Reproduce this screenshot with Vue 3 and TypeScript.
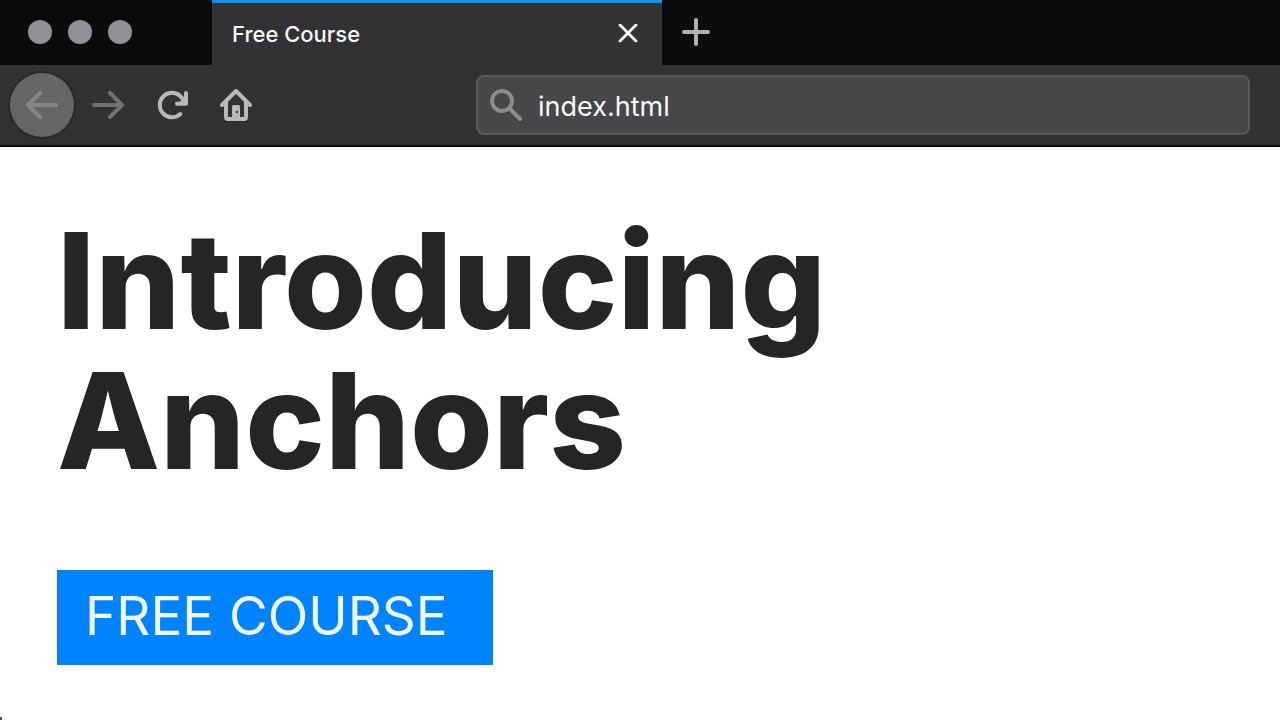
<script setup lang="ts">
import { ref } from 'vue'

const tabTitle = ref<string>('Free Course')
const address = ref<string>('index.html')
const headingLines: string[] = ['Introducing', 'Anchors']
</script>

<template>
  <div class="browser">
    <header class="tab-strip">
      <div class="window-controls">
        <button type="button" class="dot" aria-label="Close window"></button>
        <button type="button" class="dot" aria-label="Minimize window"></button>
        <button type="button" class="dot" aria-label="Zoom window"></button>
      </div>
      <div class="tab">
        <span class="tab-title">{{ tabTitle }}</span>
        <button type="button" class="icon-button tab-close" aria-label="Close tab">
          <svg width="20" height="20" viewBox="0 0 20 20">
            <path d="M2 1 18 17M18 1 2 17" stroke="#fff" stroke-width="2.8" stroke-linecap="round" />
          </svg>
        </button>
      </div>
      <button type="button" class="icon-button tab-add" aria-label="New tab">
        <svg width="28" height="28" viewBox="0 0 28 28">
          <path d="M14 2v24M2 14h24" stroke="#b1b1b3" stroke-width="4" stroke-linecap="round" />
        </svg>
      </button>
    </header>

    <nav class="toolbar" aria-label="Navigation">
      <div class="nav-buttons">
        <button type="button" class="icon-button nav back" aria-label="Back">
          <svg width="32" height="28" viewBox="0 0 32 28">
            <path d="M30 14H2M14 2 2 14l12 12" />
          </svg>
        </button>
        <button type="button" class="icon-button nav forward" aria-label="Forward">
          <svg width="32" height="28" viewBox="0 0 32 28">
            <path d="M2 14h28M18 2l12 12-12 12" />
          </svg>
        </button>
        <button type="button" class="icon-button nav" aria-label="Reload">
          <svg width="32" height="32" viewBox="0 0 32 32">
            <path d="M24.300 25A12.200 12.200 0 1 1 25 7.800L29 13" />
            <path d="M30 4v10.700H21" />
            <path class="solid" d="M30 6v9h-8z" />
          </svg>
        </button>
        <button type="button" class="icon-button nav" aria-label="Home">
          <svg width="32" height="32" viewBox="0 0 32 32">
            <path d="M2 16 16 2l14 14" />
            <path d="M6 13v15q0 2 2 2h16q2 0 2-2V13" />
            <path class="solid" fill-rule="evenodd" d="M12 29V17.500q0-1.500 1.500-1.500h5q1.500 0 1.500 1.500V29zM16 22v2h2v-2z" />
          </svg>
        </button>
      </div>
      <label class="address">
        <svg width="34" height="34" viewBox="0 0 34 34" aria-hidden="true">
          <circle cx="12" cy="13" r="10" />
          <path d="M19.500 20.500 30 31" />
        </svg>
        <input v-model="address" type="text" aria-label="Address" spellcheck="false" />
      </label>
    </nav>

    <main class="page">
      <h1 class="heading">
        <span v-for="line in headingLines" :key="line" class="line">{{ line }}</span>
      </h1>
      <a href="#course" class="course-link">FREE COURSE</a>
    </main>
    <span class="corner-mark" aria-hidden="true"></span>
  </div>
</template>

<style>
body {
  margin: 0;
  background: #fff;
}
</style>

<style scoped>
.browser {
  font-family: Inter, "Liberation Sans", sans-serif;
  color: #252527;
}

button {
  margin: 0;
  padding: 0;
  border: 0;
  background: none;
}

svg {
  display: block;
  fill: none;
}

.tab-strip {
  display: flex;
  height: 65px;
  background: #0b0b0d;
}

.window-controls {
  box-sizing: border-box;
  display: flex;
  flex: none;
  align-items: flex-start;
  gap: 16px;
  width: 212px;
  padding: 20px 28px;
}

.dot {
  width: 24px;
  height: 24px;
  border-radius: 50%;
  background: #929197;
}

.tab {
  box-sizing: border-box;
  display: flex;
  align-items: center;
  justify-content: space-between;
  width: 450px;
  padding: 0 24px 0 20px;
  border-top: 3px solid #128ff2;
  background: #323234;
}

.tab-title {
  font-size: 22px;
  font-weight: 500;
  line-height: 28px;
  color: #f9f9fa;
}

.icon-button {
  display: flex;
  align-items: center;
  justify-content: center;
}

.tab-add {
  width: 68px;
  height: 64px;
}

.toolbar {
  box-sizing: border-box;
  display: flex;
  align-items: center;
  height: 82px;
  padding: 0 30px 0 10px;
  border-bottom: 2px solid #0c0c0d;
  background: #323234;
}

.nav-buttons {
  display: flex;
  flex: none;
  width: 466px;
}

.nav {
  width: 64px;
  height: 64px;
  stroke: #b9b9ba;
  stroke-width: 4;
  stroke-linecap: round;
  stroke-linejoin: round;
}

.solid {
  fill: #b9b9ba;
  stroke: none;
}

.back {
  border-radius: 50%;
  background: #666668;
  box-shadow: 0 0 0 2px #29292b;
  stroke: #868688;
}

.forward {
  margin-left: 2px;
  stroke: #717173;
}

.address {
  box-sizing: border-box;
  display: flex;
  flex: 1;
  align-items: center;
  gap: 14px;
  min-width: 0;
  height: 60px;
  padding: 0 12px;
  border: 2px solid #59595b;
  border-radius: 8px;
  background: #474749;
}

.address svg {
  flex: none;
  stroke: #8c8c8e;
  stroke-width: 4;
  stroke-linecap: round;
}

.address input {
  flex: 1;
  min-width: 0;
  padding: 4px 0 0;
  border: 0;
  outline: 0;
  background: none;
  color: #f9f9fa;
  font-family: inherit;
  font-size: 27px;
  line-height: 36px;
}

.page {
  padding: 63px 57px 55px;
}

.heading {
  margin: 0;
  font-size: 134px;
  font-weight: 800;
  line-height: 140px;
}

.line {
  display: block;
}

.course-link {
  display: inline-block;
  box-sizing: border-box;
  min-width: 436px;
  margin-top: 80px;
  padding: 0 28px 2px;
  background: #0083ff;
  color: #f0f8ff;
  font-size: 53px;
  font-weight: 400;
  line-height: 93px;
  text-decoration: none;
}

.corner-mark {
  position: fixed;
  bottom: 0;
  left: 0;
  width: 2px;
  height: 3px;
  background: #555;
}
</style>
